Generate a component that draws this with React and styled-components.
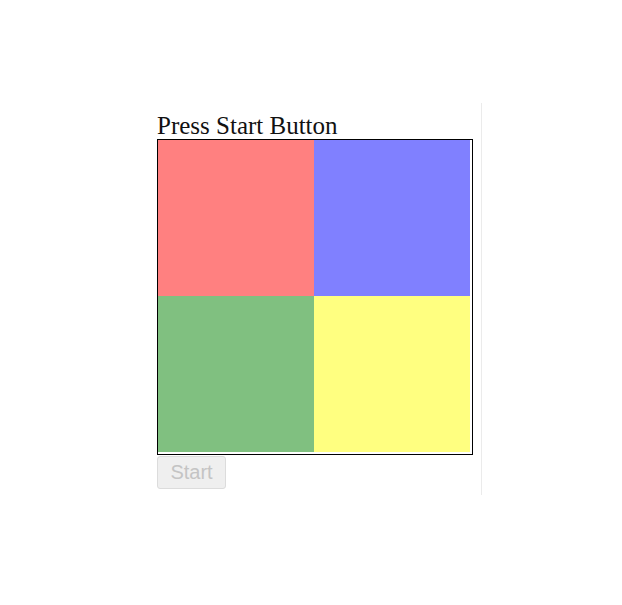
import React from "react";
import styled, { createGlobalStyle } from "styled-components";

const Global = createGlobalStyle`
  html, body { margin: 0; padding: 0; background: #fff; }
  body { font-family: "Liberation Serif", "Times New Roman", serif; }
`;

const Page = styled.div`
  padding: 103px 0 0 147px;
`;

const Panel = styled.div`
  display: inline-flex;
  flex-direction: column;
  align-items: flex-start;
  padding: 9px 8px 6px 10px;
  border-right: 1px solid #ebebeb;
`;

const Title = styled.div`
  font-family: "Liberation Serif", "Times New Roman", serif;
  font-size: 25px;
  line-height: 27px;
  color: #111;
`;

const Board = styled.div`
  width: 314px;
  height: 314px;
  border: 1px solid #000;
  display: grid;
  grid-template-columns: 156px 156px;
  grid-template-rows: 156px 156px;
  align-content: start;
  justify-content: start;
`;

const Square = styled.div`
  background: ${(p) => p.$color};
`;

const StartButton = styled.button`
  margin-top: 1px;
  font-family: "Liberation Sans", Arial, sans-serif;
  font-size: 20px;
  line-height: 23px;
  padding: 4px 12px;
  height: 33px;
  width: 69px;
  color: #c4c4c4;
  background: #efefef;
  border: 1px solid #dcdcdc;
  border-radius: 3px;
`;

const colors = ["#ff8080", "#8080ff", "#80c080", "#ffff80"];

export default function App() {
  return (
    <>
      <Global />
      <Page>
        <Panel>
          <Title>Press Start Button</Title>
          <Board>
            {colors.map((c) => (
              <Square key={c} $color={c} />
            ))}
          </Board>
          <StartButton disabled>Start</StartButton>
        </Panel>
      </Page>
    </>
  );
}
